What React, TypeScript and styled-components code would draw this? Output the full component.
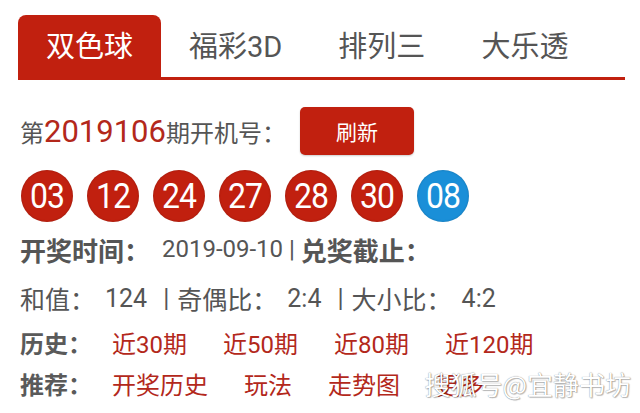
import React from 'react';
import styled, { createGlobalStyle } from 'styled-components';

const GlobalStyle = createGlobalStyle`
  html, body {
    margin: 0;
    padding: 0;
    background: #fff;
  }
  body {
    font-family: Roboto, "Noto Sans CJK SC", sans-serif;
    color: #555;
  }
`;

const RED = '#c1200f';
const LINK_RED = '#b3281b';

const Page = styled.div`
  position: relative;
  width: 640px;
  height: 413px;
  overflow: hidden;
  padding: 15px 15px 0 18px;
  box-sizing: border-box;
`;

const TabBar = styled.div`
  display: flex;
  align-items: flex-end;
  border-bottom: 3px solid ${RED};
  height: 62px;
`;

const Tab = styled.div<{ $active?: boolean }>`
  height: 100%;
  display: flex;
  align-items: center;
  padding: 0 28px 4px;
  box-sizing: border-box;
  font-size: 29px;
  border-radius: 8px 8px 0 0;
  background: ${({ $active }) => ($active ? RED : 'transparent')};
  color: ${({ $active }) => ($active ? '#fff' : '#555')};
`;

const IssueRow = styled.div`
  display: flex;
  align-items: center;
  margin-top: 27px;
  height: 48px;
  padding-left: 2px;
  font-size: 24px;
`;

const IssueNo = styled.span`
  font-size: 31px;
  color: ${LINK_RED};
`;

const RefreshButton = styled.button`
  margin-left: 14px;
  width: 114px;
  height: 48px;
  border: none;
  border-radius: 5px;
  background: ${RED};
  color: #fff;
  font-family: "Noto Sans CJK SC", sans-serif;
  font-size: 21px;
  box-shadow: 0 1px 2px rgba(0, 0, 0, 0.2);
`;

const BallRow = styled.div`
  display: flex;
  gap: 14px;
  margin-top: 15px;
  padding-left: 3px;
`;

const Ball = styled.div<{ $blue?: boolean }>`
  width: 52px;
  height: 52px;
  border-radius: 50%;
  display: flex;
  align-items: center;
  justify-content: center;
  background: ${({ $blue }) => ($blue ? '#1a8fd8' : RED)};
  box-shadow: inset 0 0 2px rgba(0, 0, 0, 0.25);
  color: #fff;
  font-size: 32px;
  letter-spacing: -1px;
`;

const BallNum = styled.span`
  display: inline-block;
  transform: scaleY(1.08);
`;

const InfoRow = styled.div<{ $top: number; $size?: number }>`
  display: flex;
  align-items: center;
  height: 34px;
  margin-top: ${({ $top }) => $top}px;
  padding-left: 2px;
  font-size: ${({ $size }) => $size ?? 24}px;
  white-space: pre;
`;

const Strong = styled.span`
  font-size: 26px;
  font-weight: 700;
  color: #555;
`;

const Value = styled.span<{ $last?: boolean }>`
  margin-left: 10px;
  margin-right: ${({ $last }) => ($last ? 0 : 16)}px;
`;

const Sep = styled.span`
  margin-right: 8px;
`;

const Label = styled.span`
  font-weight: 700;
  width: 92px;
  color: #5a5a5a;
`;

const Links = styled.div`
  display: flex;
  gap: 36px;
`;

const Link = styled.span`
  color: ${LINK_RED};
`;

const Watermark = styled.div`
  position: absolute;
  right: 9px;
  bottom: 11px;
  font-family: "Noto Sans CJK SC", sans-serif;
  font-size: 26px;
  color: #fff;
  text-shadow: 0 0 1px rgba(0, 0, 0, 0.55), 1px 1px 1px rgba(0, 0, 0, 0.25);
`;

const tabs = ['双色球', '福彩3D', '排列三', '大乐透'];
const reds = ['03', '12', '24', '27', '28', '30'];
const history = ['近30期', '近50期', '近80期', '近120期'];
const recommend = ['开奖历史', '玩法', '走势图', '更多'];
const stats = [
  { k: '和值：', v: '124' },
  { k: '奇偶比：', v: '2:4' },
  { k: '大小比：', v: '4:2' },
];

const App = () => {
  return (
    <>
      <GlobalStyle />
      <Page>
        <TabBar>
          {tabs.map((t, i) => (
            <Tab key={t} $active={i === 0}>
              {t}
            </Tab>
          ))}
        </TabBar>

        <IssueRow>
          第<IssueNo>2019106</IssueNo>期开机号：
          <RefreshButton>刷新</RefreshButton>
        </IssueRow>

        <BallRow>
          {reds.map((n) => (
            <Ball key={n}>
              <BallNum>{n}</BallNum>
            </Ball>
          ))}
          <Ball $blue>
            <BallNum>08</BallNum>
          </Ball>
        </BallRow>

        <InfoRow $top={10}>
          <Strong>开奖时间：</Strong>  2019-09-10 | <Strong>兑奖截止：</Strong>
        </InfoRow>

        <InfoRow $top={15} $size={25}>
          {stats.map((s, i) => (
            <React.Fragment key={s.k}>
              {i > 0 && <Sep>|</Sep>}
              {s.k}
              <Value $last={i === stats.length - 1}>{s.v}</Value>
            </React.Fragment>
          ))}
        </InfoRow>

        <InfoRow $top={10}>
          <Label>历史：</Label>
          <Links>
            {history.map((h) => (
              <Link key={h}>{h}</Link>
            ))}
          </Links>
        </InfoRow>

        <InfoRow $top={7}>
          <Label>推荐：</Label>
          <Links>
            {recommend.map((r) => (
              <Link key={r}>{r}</Link>
            ))}
          </Links>
        </InfoRow>

        <Watermark>搜狐号@宜静书坊</Watermark>
      </Page>
    </>
  );
};

export default App;
